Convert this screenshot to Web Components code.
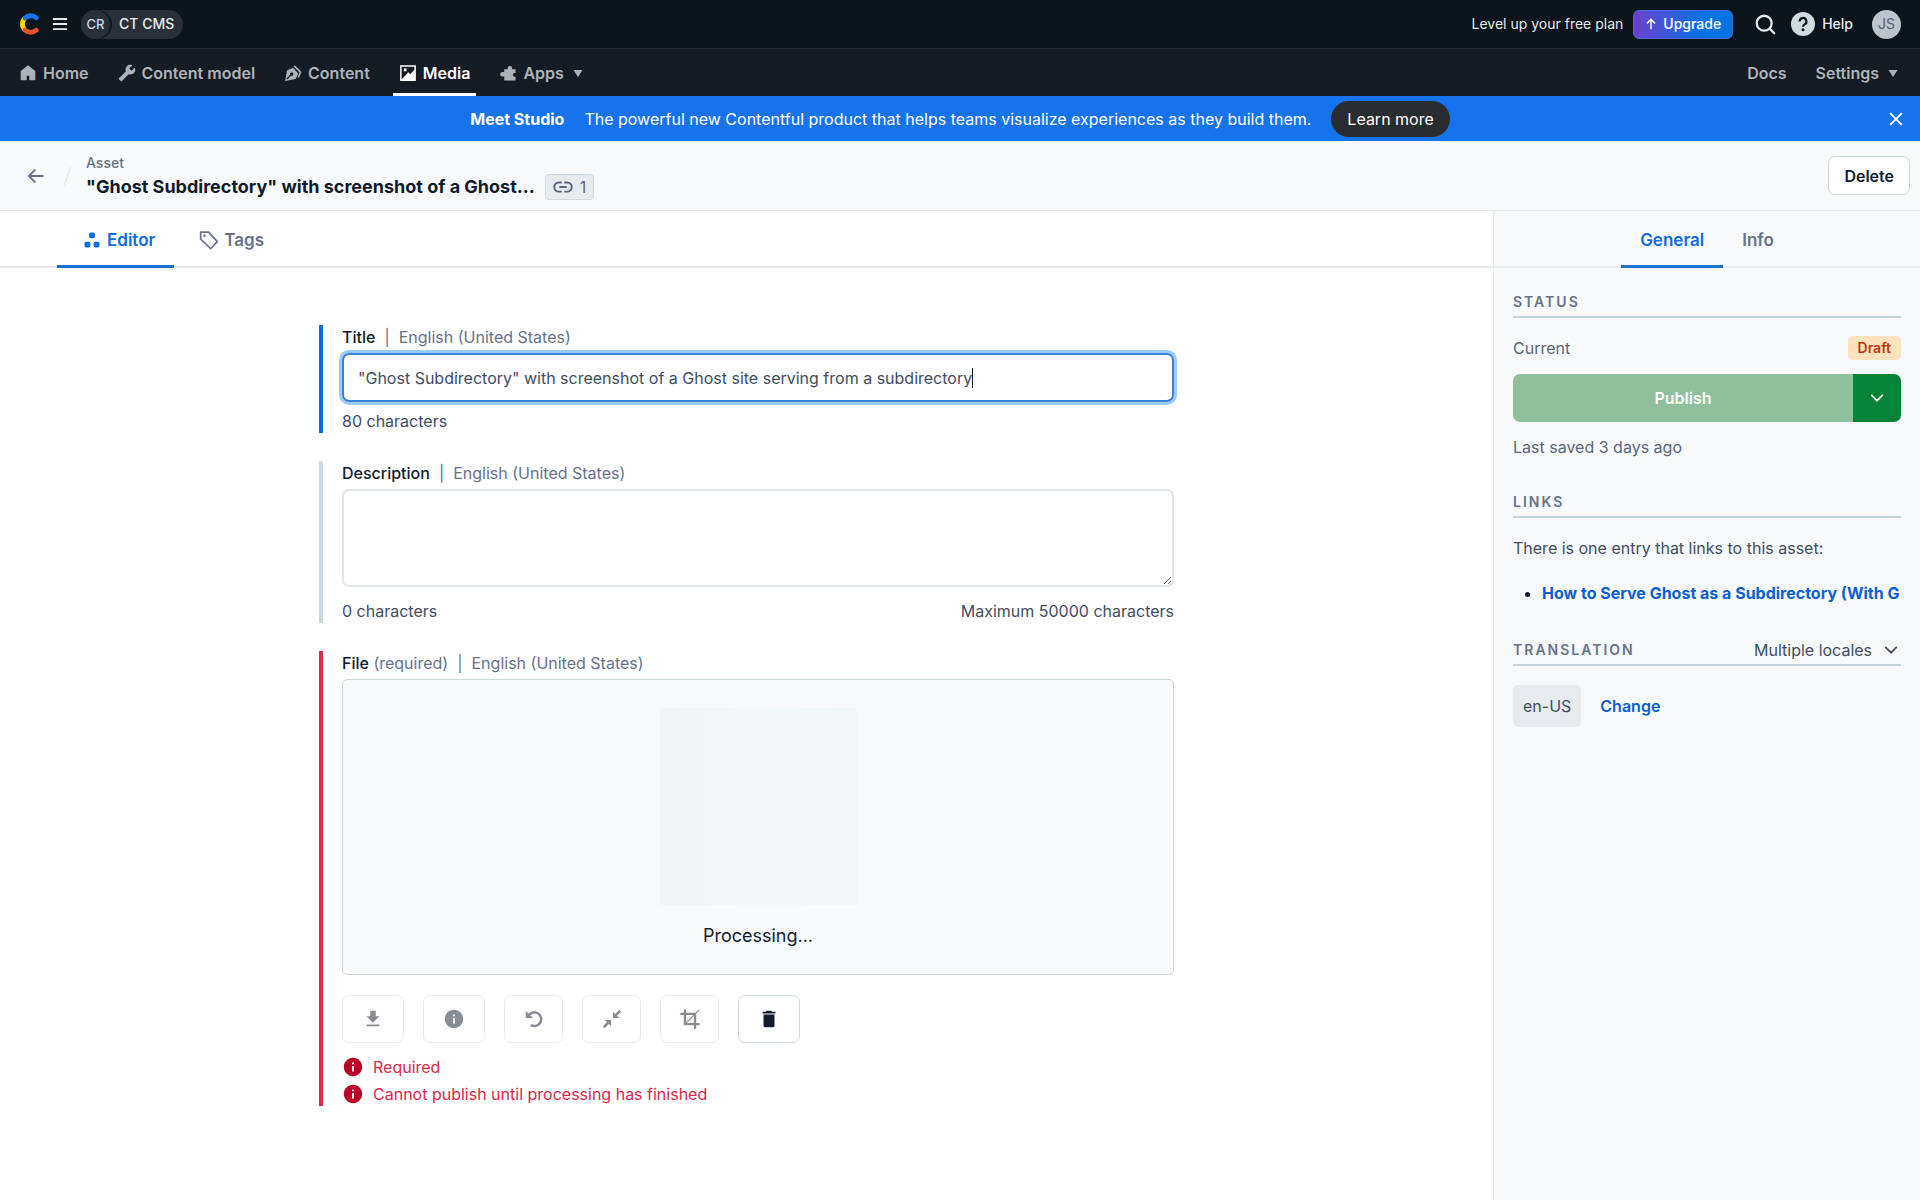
<!DOCTYPE html>
<html lang="en">
<head>
<meta charset="utf-8">
<meta name="viewport" content="width=device-width, initial-scale=1">
<title>Asset editor</title>
<style>
    body {
        margin: 0;
        font-family: Inter, "Liberation Sans", sans-serif;
        font-size: 16px;
        line-height: 24px;
        color: #414d63;
        background: #fff;
    }
</style>
</head>
<body>
<asset-page></asset-page>

<script>
const ICONS = {
    logo: `<g fill="none" stroke-width="4.800" stroke-linecap="round">
        <path stroke="#ffd900" stroke-linecap="butt" d="M7 6A8.300 8.300 0 0 0 7 18"/>
        <path stroke="#e8512c" d="M7 18A8.300 8.300 0 0 0 18.200 18.200"/>
        <path stroke="#1773eb" d="M7 6A8.300 8.300 0 0 1 18.200 5.800"/></g>`,
    menu: '<path d="M2.500 4h19v2.500h-19zM2.500 10.800h19v2.500h-19zM2.500 17.500h19V20h-19z"/>',
    home: '<path d="M12 2.500L3 10v11h6.500v-6h5v6H21V10z" stroke="currentColor" stroke-width="1.500" stroke-linejoin="round"/>',
    wrench: '<path transform="matrix(-1 0 0 1 24 0)" d="M22.700 19l-9.100-9.100c.9-2.300.4-5-1.500-6.900-2-2-5-2.400-7.400-1.300L9 6 6 9 1.600 4.700C.4 7.100.9 10.100 2.900 12.100c1.900 1.900 4.600 2.400 6.900 1.500l9.100 9.100c.4.4 1 .4 1.400 0l2.300-2.300c.5-.4.5-1.100.1-1.400z"/>',
    pen: '<path fill-rule="evenodd" d="M1.500 22.500L4 8.500 12 5l7 7.500L15.500 20zM4.500 20.500l5-5a2.200 2.200 0 1 0-1.200-1.200l-5 5z"/><path d="M13.500 2.500L22 11l-3 7" fill="none" stroke="currentColor" stroke-width="2.200"/>',
    image: '<path fill-rule="evenodd" d="M1.500 1.500h21v21h-21zM3.500 3.500v17L12.500 11l2.500 2.500 5.500-6V3.500zM6.500 6h3.500v3.500H6.500z"/>',
    puzzle: '<path d="M7 7h4.500V5.500a3 3 0 0 1 6 0V7H22v5h-1a2.500 2.500 0 0 0 0 5h1v5H7v-5.500H4.500a3 3 0 0 1 0-6H7z"/>',
    caret: '<path d="M3 6h18l-9 14z"/>',
    up: '<path d="M12 21V4M5 11l7-7 7 7" fill="none" stroke="currentColor" stroke-width="2.500"/>',
    search: '<g fill="none" stroke="currentColor" stroke-width="2.600" stroke-linecap="round"><circle cx="10.500" cy="10.500" r="8.500"/><path d="M17 17l5 5"/></g>',
    help: '<circle cx="12" cy="12" r="12"/><path d="M8.600 9.400a3.400 3.400 0 1 1 5 3c-1.200.7-1.600 1.100-1.600 2.400" fill="none" stroke="#0c141c" stroke-width="2.200"/><circle cx="12" cy="17.800" r="1.500" fill="#0c141c"/>',
    close: '<path d="M4 4l16 16M20 4L4 20" fill="none" stroke="currentColor" stroke-width="2.800" stroke-linecap="round"/>',
    back: '<path d="M22 12H3M11 3.500L2.500 12l8.500 8.500" fill="none" stroke="currentColor" stroke-width="2.500"/>',
    link: '<g fill="none" stroke="currentColor" stroke-width="2.300"><path d="M10.500 6.500H7a5.500 5.500 0 0 0 0 11h3.500M13.500 6.500H17a5.500 5.500 0 0 1 0 11h-3.500M7.500 12h9"/></g>',
    editor: '<rect x="8.500" y="3" width="7" height="7" rx="2"/><rect x="3" y="14" width="7" height="7" rx="2"/><rect x="14" y="14" width="7" height="7" rx="2"/>',
    tag: '<path d="M2 2.500h9.500L22 14l-8 8.500L2 11z" fill="none" stroke="currentColor" stroke-width="2" stroke-linejoin="round"/><circle cx="6.500" cy="6.800" r="1.500"/>',
    download: '<path d="M19 9h-4V3H9v6H5l7 7 7-7zM5 18v2h14v-2H5z"/>',
    info: '<path d="M12 2C6.480 2 2 6.480 2 12s4.480 10 10 10 10-4.480 10-10S17.520 2 12 2zm1 15h-2v-6h2v6zm0-8h-2V7h2v2z"/>',
    rotate: '<path d="M6.500 7.500A7.500 7.500 0 1 1 8.500 18.700" fill="none" stroke="currentColor" stroke-width="2.700"/><path d="M3 3v8h8z"/>',
    collapse: '<path d="M13 4v7h7l-2.500-2.500L22 4l-2-2-4.500 4.500zM11 20v-7H4l2.500 2.500L2 20l2 2 4.500-4.500z"/>',
    crop: '<path d="M6.500 1.500v16h16M1.500 6.500h16v16" fill="none" stroke="currentColor" stroke-width="2.500"/><path d="M22 2L7 17" stroke="currentColor" stroke-width="1.200"/>',
    trash: '<path d="M6 19c0 1.100.9 2 2 2h8c1.100 0 2-.9 2-2V7H6v12zM19 4h-3.500l-1-1h-5l-1 1H5v2h14V4z"/>',
    chevron: '<path d="M4 8l8 8 8-8" fill="none" stroke="currentColor" stroke-width="2.600" stroke-linecap="round"/>'
};

const RESET = `
    * { box-sizing: border-box; }
    button, input, textarea, select {
        font: inherit;
        color: inherit;
        margin: 0;
        padding: 0;
        border: 0;
        background: none;
    }
    a { color: inherit; text-decoration: none; }
    h1, h2, p, ul { margin: 0; padding: 0; font-size: inherit; }
`;

// Attaches an open root holding the shared reset, the styles and the markup
function render(host, css, html) {
    host.attachShadow({ mode: 'open' });
    host.shadowRoot.innerHTML = `<style>${RESET}${css}</style>${html}`;
}

class UiIcon extends HTMLElement {
    connectedCallback() {
        if (this.shadowRoot) return;
        const size = this.getAttribute('size') || 18;
        render(this, `
            :host { display: inline-flex; flex: none; }
            svg { display: block; fill: currentColor; }
        `, `<svg width="${size}" height="${size}" viewBox="0 0 24 24" aria-hidden="true">${ICONS[this.getAttribute('name')]}</svg>`);
    }
}
customElements.define('ui-icon', UiIcon);

class TopBar extends HTMLElement {
    constructor() {
        super();
        render(this, `
            :host {
                display: flex;
                align-items: center;
                justify-content: space-between;
                height: 48px;
                padding: 0 19px 0 18px;
                font-size: 14px;
                color: #e7ebee;
                background: #0c141c;
            }
            .group { display: flex; align-items: center; }
            button { display: flex; align-items: center; }
            .menu { margin: 0 12px 0 9px; }
            .space {
                height: 29px;
                padding-right: 9px;
                gap: 9px;
                border-radius: 15px;
                font-weight: 500;
                background: #2a3039;
            }
            .space span {
                display: flex;
                align-items: center;
                justify-content: center;
                width: 29px;
                height: 29px;
                border-radius: 50%;
                font-size: 13px;
                color: #cfd9e0;
                background: #2a3039;
                box-shadow: 2px 0 0 #0c141c;
            }
            .upgrade {
                gap: 5px;
                height: 29px;
                margin: 0 22px 0 10px;
                padding: 0 11px 0 10px;
                border: 1px solid #4a6ad8;
                border-radius: 6px;
                font-weight: 500;
                color: #fff;
                background: linear-gradient(90deg, #6d3fd0, #0772e4 70%);
            }
            .help { gap: 7px; margin: 0 19px 0 15px; font-weight: 500; }
            .help ui-icon { color: #cfd9e0; }
            .avatar {
                justify-content: center;
                width: 29px;
                height: 29px;
                border-radius: 50%;
                color: #55606e;
                background: #bcc5cc;
            }
        `, `
            <div class="group">
                <ui-icon name="logo" size="24"></ui-icon>
                <button class="menu" aria-label="Menu"><ui-icon name="menu" size="18"></ui-icon></button>
                <button class="space"><span>CR</span>CT CMS</button>
            </div>
            <div class="group">
                Level up your free plan
                <button class="upgrade"><ui-icon name="up" size="14"></ui-icon>Upgrade</button>
                <button aria-label="Search"><ui-icon name="search" size="21"></ui-icon></button>
                <button class="help"><ui-icon name="help" size="24"></ui-icon>Help</button>
                <button class="avatar" aria-label="Account">JS</button>
            </div>
        `);
    }
}
customElements.define('top-bar', TopBar);

class NavItem extends HTMLElement {
    connectedCallback() {
        if (this.shadowRoot) return;
        const icon = this.getAttribute('icon');
        const inner = `
            ${icon ? `<ui-icon name="${icon}" size="18"></ui-icon>` : ''}
            <slot></slot>
            ${this.hasAttribute('menu') ? '<ui-icon class="caret" name="caret" size="12"></ui-icon>' : ''}`;
        render(this, `
            :host { display: flex; }
            a, button {
                display: flex;
                align-items: center;
                gap: 6px;
                padding: 3px 6px 0;
                border-bottom: 3px solid transparent;
                font-weight: 600;
                color: #aeb3ba;
            }
            .caret { margin-left: 2px; }
            :host([active]) a { color: #fff; border-bottom-color: #fff; }
        `, this.hasAttribute('menu') ? `<button>${inner}</button>` : `<a href="#">${inner}</a>`);
    }
}
customElements.define('nav-item', NavItem);

class MainNav extends HTMLElement {
    constructor() {
        super();
        render(this, `
            :host {
                display: flex;
                justify-content: space-between;
                height: 48px;
                padding: 0 15px 0 13px;
                border-top: 1px solid #262c34;
                background: #161c24;
            }
            nav { display: flex; gap: 17px; }
        `, `
            <nav>
                <nav-item icon="home">Home</nav-item>
                <nav-item icon="wrench">Content model</nav-item>
                <nav-item icon="pen">Content</nav-item>
                <nav-item icon="image" active>Media</nav-item>
                <nav-item icon="puzzle" menu>Apps</nav-item>
            </nav>
            <nav>
                <nav-item>Docs</nav-item>
                <nav-item menu>Settings</nav-item>
            </nav>
        `);
    }
}
customElements.define('main-nav', MainNav);

class PromoBanner extends HTMLElement {
    constructor() {
        super();
        render(this, `
            :host {
                display: grid;
                grid-template-columns: 1fr auto 1fr;
                align-items: center;
                height: 45px;
                padding: 0 16px;
                color: #fff;
                background: #1773eb;
            }
            div { grid-column: 2; display: flex; align-items: center; gap: 20px; }
            strong { font-weight: 700; }
            a {
                padding: 6px 16px;
                border-radius: 18px;
                background: #2a2d30;
            }
            button { display: flex; justify-self: end; }
        `, `
            <div>
                <strong>Meet Studio</strong>
                <slot></slot>
                <a href="#">Learn more</a>
            </div>
            <button aria-label="Dismiss"><ui-icon name="close" size="16"></ui-icon></button>
        `);
    }
}
customElements.define('promo-banner', PromoBanner);

class AssetHeader extends HTMLElement {
    constructor() {
        super();
        render(this, `
            :host {
                display: flex;
                align-items: center;
                height: 70px;
                padding: 0 10px 0 27px;
                border-bottom: 1px solid #e7ebee;
                background: #f7f9fa;
            }
            .back { display: flex; color: #67728a; }
            .slash { width: 7px; height: 18px; margin: 0 15px 0 19px; }
            .name { flex: 1; min-width: 0; }
            .type { font-size: 14px; line-height: 22px; font-weight: 500; color: #67728a; }
            .row { display: flex; align-items: center; gap: 10px; }
            h1 { font-size: 18px; line-height: 26px; font-weight: 700; color: #111b2b; }
            .links {
                display: flex;
                align-items: center;
                gap: 7px;
                height: 26px;
                padding: 0 7px;
                border: 1px solid #cfd9e0;
                border-radius: 4px;
                color: #5a657c;
                background: #e7ebee;
            }
            .delete {
                height: 39px;
                padding: 0 15px;
                border: 1px solid #cfd9e0;
                border-radius: 7px;
                font-weight: 600;
                color: #111b2b;
                background: #fff;
            }
        `, `
            <button class="back" aria-label="Back"><ui-icon name="back" size="18"></ui-icon></button>
            <svg class="slash" viewBox="0 0 7 18"><path d="M6.500 0L.5 18" stroke="#dde3e8"/></svg>
            <div class="name">
                <p class="type">Asset</p>
                <div class="row">
                    <h1>"Ghost Subdirectory" with screenshot of a Ghost...</h1>
                    <button class="links" aria-label="Incoming links"><ui-icon name="link" size="20"></ui-icon>1</button>
                </div>
            </div>
            <button class="delete">Delete</button>
        `);
    }
}
customElements.define('asset-header', AssetHeader);

class TabItem extends HTMLElement {
    connectedCallback() {
        if (this.shadowRoot) return;
        const icon = this.getAttribute('icon');
        const active = this.hasAttribute('active');
        render(this, `
            :host { display: flex; margin-bottom: -2px; }
            button {
                display: flex;
                align-items: center;
                gap: 5px;
                padding: var(--tab-padding, 3px 19px 0);
                border-bottom: 3px solid transparent;
                font-size: 17px;
                font-weight: 600;
                color: #67728a;
            }
            button[aria-selected=true] { color: #0f6be0; border-bottom-color: #1f6fd0; }
        `, `<button role="tab" aria-selected="${active}">
                ${icon ? `<ui-icon name="${icon}" size="20"></ui-icon>` : ''}<slot></slot>
            </button>`);
    }
}
customElements.define('tab-item', TabItem);

class TabBar extends HTMLElement {
    constructor() {
        super();
        render(this, `
            :host {
                display: flex;
                height: 57px;
                border-bottom: 2px solid #e7ebee;
            }
        `, '<slot></slot>');
    }
    connectedCallback() {
        this.setAttribute('role', 'tablist');
    }
}
customElements.define('tab-bar', TabBar);

const FIELD_CSS = `
    :host {
        display: block;
        padding-left: 19px;
        border-left: 4px solid #cfd9e0;
    }
    :host([active]) { border-left-color: #0c6bdd; }
    :host([invalid]) { border-left-color: #da294a; }
    .label { display: flex; gap: 9px; padding-bottom: 4px; color: #67728a; }
    .label b { font-weight: 500; color: #111b2b; }
    .hint { display: flex; justify-content: space-between; }
`;

class TitleField extends HTMLElement {
    constructor() {
        super();
        render(this, `${FIELD_CSS}
            .box {
                display: flex;
                align-items: center;
                height: 49px;
                padding: 0 14px;
                border: 2px solid #3c80d8;
                border-radius: 7px;
                box-shadow: 0 0 0 3px #98cbff;
            }
            input { field-sizing: content; max-width: 100%; outline: 0; }
            .cursor { width: 1px; height: 20px; background: #111b2b; }
            .hint { padding-top: 7px; }
        `, `
            <div class="label"><label for="title"><b>Title</b></label><span>|</span><span>English (United States)</span></div>
            <div class="box">
                <input id="title" value='"Ghost Subdirectory" with screenshot of a Ghost site serving from a subdirectory'>
                <span class="cursor"></span>
            </div>
            <div class="hint">80 characters</div>
        `);
    }
}
customElements.define('title-field', TitleField);

class DescriptionField extends HTMLElement {
    constructor() {
        super();
        render(this, `${FIELD_CSS}
            textarea {
                display: block;
                width: 100%;
                height: 98px;
                padding: 10px 14px;
                border: 2px solid #e1e6eb;
                border-radius: 7px;
                resize: vertical;
            }
            .hint { padding-top: 12px; }
        `, `
            <div class="label"><label for="description"><b>Description</b></label><span>|</span><span>English (United States)</span></div>
            <textarea id="description"></textarea>
            <div class="hint"><span>0 characters</span><span>Maximum 50000 characters</span></div>
        `);
    }
}
customElements.define('description-field', DescriptionField);

class FileField extends HTMLElement {
    constructor() {
        super();
        const action = (name, label, attrs) =>
            `<button aria-label="${label}" ${attrs}><ui-icon name="${name}" size="22"></ui-icon></button>`;
        render(this, `${FIELD_CSS}
            .preview {
                display: flex;
                flex-direction: column;
                align-items: center;
                gap: 17px;
                padding: 28px 0 24px;
                border: 1px solid #cfd9e0;
                border-radius: 5px;
                font-size: 18px;
                line-height: 28px;
                color: #111b2b;
                background: #f7f9fa;
            }
            .skeleton {
                width: 197px;
                height: 197px;
                background: linear-gradient(90deg, #f2f4f6, #f3f7f8 40%, #f1f7f7);
            }
            .actions { display: flex; gap: 19px; padding: 20px 0 12px; }
            button {
                display: flex;
                align-items: center;
                justify-content: center;
                width: 62px;
                height: 48px;
                border: 1px solid #cfd9e0;
                border-radius: 7px;
                color: #111b2b;
            }
            .edit { width: 59px; }
            button[disabled] { color: #888d95; border-color: #e7ebee; }
            .errors { display: flex; flex-direction: column; gap: 3px; color: #da294a; }
            .errors p { display: flex; align-items: center; gap: 9px; }
            .errors ui-icon { color: #bd002a; }
        `, `
            <div class="label"><span><b id="file">File</b> (required)</span><span>|</span><span>English (United States)</span></div>
            <div class="preview" role="group" aria-labelledby="file">
                <div class="skeleton"></div>
                <p>Processing...</p>
            </div>
            <div class="actions">
                ${action('download', 'Download', 'disabled')}
                ${action('info', 'File details', 'disabled')}
                ${action('rotate', 'Rotate', 'class="edit" disabled')}
                ${action('collapse', 'Resize', 'class="edit" disabled')}
                ${action('crop', 'Crop', 'class="edit" disabled')}
                ${action('trash', 'Delete file', '')}
            </div>
            <div class="errors">
                <p><ui-icon name="info" size="22"></ui-icon>Required</p>
                <p><ui-icon name="info" size="22"></ui-icon>Cannot publish until processing has finished</p>
            </div>
        `);
    }
}
customElements.define('file-field', FileField);

class SideSection extends HTMLElement {
    constructor() {
        super();
        render(this, `
            :host { display: block; }
            header {
                display: flex;
                align-items: center;
                justify-content: space-between;
                padding-bottom: 2px;
                border-bottom: 2px solid #c5d3dc;
            }
            h2 {
                font-size: 14px;
                line-height: 24px;
                font-weight: 600;
                letter-spacing: 2px;
                text-transform: uppercase;
                color: #67728a;
            }
        `, `
            <header><h2></h2><slot name="control"></slot></header>
            <slot></slot>
        `);
    }
    connectedCallback() {
        this.shadowRoot.querySelector('h2').textContent = this.getAttribute('heading');
    }
}
customElements.define('side-section', SideSection);

class AssetSidebar extends HTMLElement {
    constructor() {
        super();
        render(this, `
            :host {
                display: block;
                border-left: 1px solid #e7ebee;
                background: #f7f9fa;
            }
            tab-bar { justify-content: center; }
            .body { display: flex; flex-direction: column; gap: 31px; padding: 22px 19px; }
            .status {
                display: flex;
                align-items: center;
                justify-content: space-between;
                padding: 18px 0 14px;
                color: #5a657c;
            }
            .badge {
                padding: 0 10px;
                border-radius: 5px;
                font-size: 14px;
                font-weight: 600;
                color: #bb3a12;
                background: #ffe3bc;
            }
            .publish { display: flex; height: 48px; border-radius: 7px; overflow: hidden; color: #fff; }
            .publish button {
                display: flex;
                align-items: center;
                justify-content: center;
                font-weight: 600;
            }
            .publish button:first-child { flex: 1; background: #8fbf9d; }
            .publish button:last-child { width: 48px; background: #058338; }
            .saved { padding-top: 13px; color: #5a657c; }
            .intro { padding-top: 18px; }
            ul { padding: 21px 0 2px 29px; overflow: hidden; white-space: nowrap; color: #111b2b; }
            li a { font-weight: 700; color: #0c5fcf; }
            .select { display: flex; align-items: center; gap: 10px; padding-right: 2px; }
            select { appearance: none; outline: 0; }
            .locales { display: flex; align-items: center; gap: 19px; padding-top: 19px; }
            .locales a { font-weight: 600; color: #0c5fcf; }
            .locales span { padding: 9px 10px; border-radius: 5px; background: #e7ebee; }
        `, `
            <tab-bar>
                <tab-item active>General</tab-item>
                <tab-item>Info</tab-item>
            </tab-bar>
            <div class="body">
                <side-section heading="Status">
                    <div class="status">Current<span class="badge">Draft</span></div>
                    <div class="publish">
                        <button disabled>Publish</button>
                        <button aria-label="More actions"><ui-icon name="chevron" size="16"></ui-icon></button>
                    </div>
                    <p class="saved">Last saved 3 days ago</p>
                </side-section>
                <side-section heading="Links">
                    <p class="intro">There is one entry that links to this asset:</p>
                    <ul><li><a href="#">How to Serve Ghost as a Subdirectory (With G</a></li></ul>
                </side-section>
                <side-section heading="Translation">
                    <div class="select" slot="control">
                        <select aria-label="Translation"><option>Multiple locales</option></select>
                        <ui-icon name="chevron" size="16"></ui-icon>
                    </div>
                    <div class="locales"><span>en-US</span><a href="#">Change</a></div>
                </side-section>
            </div>
        `);
    }
}
customElements.define('asset-sidebar', AssetSidebar);

class AssetPage extends HTMLElement {
    constructor() {
        super();
        render(this, `
            :host { display: flex; flex-direction: column; min-height: 100vh; }
            .work { display: flex; flex: 1; }
            main { flex: 1; min-width: 0; }
            main tab-bar { --tab-padding: 3px 19px 0 25px; padding-left: 57px; }
            asset-sidebar { flex: 0 0 427px; min-width: 0; }
            .fields {
                display: flex;
                flex-direction: column;
                gap: 28px;
                max-width: 855px;
                margin: 0 auto;
                padding: 57px 0;
            }
        `, `
            <top-bar></top-bar>
            <main-nav></main-nav>
            <promo-banner>The powerful new Contentful product that helps teams visualize experiences as they build them.</promo-banner>
            <asset-header></asset-header>
            <div class="work">
                <main>
                    <tab-bar>
                        <tab-item icon="editor" active>Editor</tab-item>
                        <tab-item icon="tag">Tags</tab-item>
                    </tab-bar>
                    <div class="fields">
                        <title-field active></title-field>
                        <description-field></description-field>
                        <file-field invalid></file-field>
                    </div>
                </main>
                <asset-sidebar></asset-sidebar>
            </div>
        `);
    }
}
customElements.define('asset-page', AssetPage);
</script>
</body>
</html>
